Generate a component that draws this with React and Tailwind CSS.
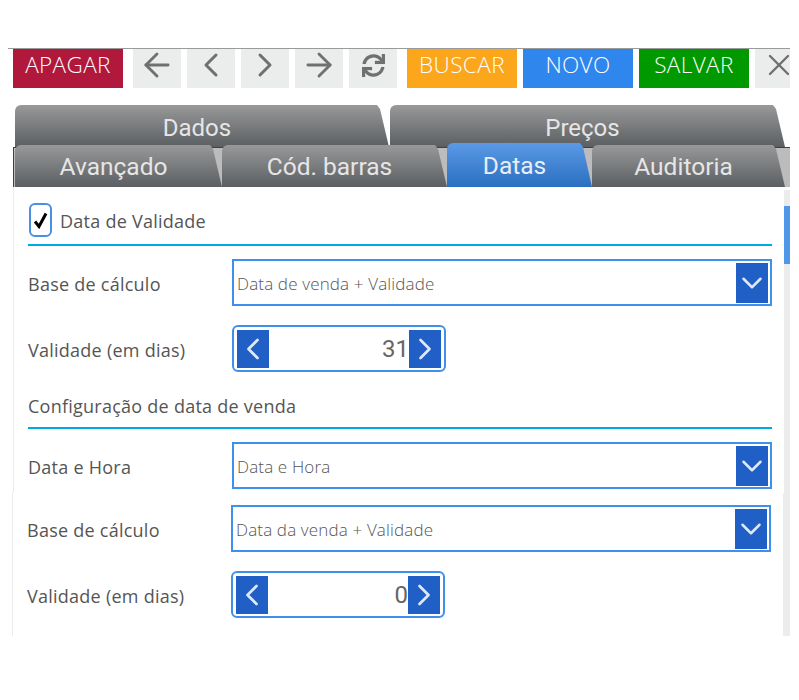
import { ArrowLeft, ArrowRight, ChevronDown, ChevronLeft, ChevronRight, X } from "lucide-react";
import { FaSync } from "react-icons/fa";

const GRAY_TAB = "bg-gradient-to-b from-[#999999] to-[#5b5f62] text-[#e6e6e6]";
const BLUE_TAB = "bg-gradient-to-b from-[#5a9ae6] to-[#2a6fc0] text-[#e8eef5]";
const FONT = "font-['Open_Sans',sans-serif]";
const TAB_CLIP = "[clip-path:polygon(0_0,calc(100%-12px)_0,calc(100%-9px)_4px,100%_100%,0_100%)]";

function ActionButton({ color, children }) {
  return (
    <button className={`w-[110px] h-[39px] pb-[7px] shrink-0 ${color} text-white text-[22.5px] font-light ${FONT} flex items-center justify-center tracking-[0.4px]`}>
      {children}
    </button>
  );
}

function IconButton({ icon: Icon, size = 38, strokeWidth = 1.8 }) {
  return (
    <button className="w-12 h-[39px] pb-[7px] shrink-0 bg-[#ebecec] flex items-center justify-center text-[#707070]">
      <Icon size={size} strokeWidth={strokeWidth} className="shrink-0" />
    </button>
  );
}

function Tab({ width, active, h, className = "", children }) {
  return (
    <div
      className={`${width} ${h} shrink-0 rounded-t-md ${TAB_CLIP} ${active ? BLUE_TAB : GRAY_TAB} flex items-center justify-center pr-[10px] font-['Roboto',sans-serif] ${className}`}
    >
      {children}
    </div>
  );
}

function SelectField({ value }) {
  return (
    <div className="w-[540px] h-[47px] border-2 border-[#3f8fec] flex items-center justify-between pl-[3px] pr-[2px] bg-white">
      <span className={`pt-[3px] text-[17px] tracking-[0.15px] text-[#555] ${FONT} font-light`}>{value}</span>
      <span className="w-8 h-10 bg-[#205fc6] flex items-center justify-center text-[#dfe8f7]">
        <ChevronDown size={34} strokeWidth={1.8} className="shrink-0" />
      </span>
    </div>
  );
}

function Stepper({ value }) {
  return (
    <div className="w-[214px] h-[47px] border-2 border-[#3f8fec] rounded-md flex items-center justify-between px-[3px] bg-white">
      <span className="w-8 h-[38px] bg-[#205fc6] flex items-center justify-center text-[#dfe8f7]">
        <ChevronLeft size={36} strokeWidth={1.8} className="shrink-0" />
      </span>
      <span className="flex-1 text-right text-2xl text-[#666] font-['Roboto',sans-serif]">{value}</span>
      <span className="w-8 h-[38px] bg-[#205fc6] flex items-center justify-center text-[#dfe8f7]">
        <ChevronRight size={36} strokeWidth={1.8} className="shrink-0" />
      </span>
    </div>
  );
}

function FormRow({ label, className = "", children }) {
  return (
    <div className={`flex items-center ${className}`}>
      <span className={`w-[204px] shrink-0 pt-[2px] text-lg tracking-[0.25px] text-[#555] ${FONT}`}>{label}</span>
      {children}
    </div>
  );
}

export default function App() {
  return (
    <div className="w-[799px] h-[700px] bg-white overflow-hidden pt-12 pl-2">
      <div className="w-[782px] border-t border-[#9a9a9a] overflow-hidden">
        {/* toolbar */}
        <div className="flex gap-[10px] pl-[5px]">
          <ActionButton color="bg-[#b0183c]">APAGAR</ActionButton>
          <div className="flex gap-[6px]">
            <IconButton icon={ArrowLeft} />
            <IconButton icon={ChevronLeft} size={40} />
            <IconButton icon={ChevronRight} size={40} />
            <IconButton icon={ArrowRight} />
            <IconButton icon={FaSync} size={23} />
          </div>
          <div className="flex gap-[6px]">
            <ActionButton color="bg-[#fca61c]">BUSCAR</ActionButton>
            <ActionButton color="bg-[#2f86ec]">NOVO</ActionButton>
            <ActionButton color="bg-[#009a00]">SALVAR</ActionButton>
            <IconButton icon={X} size={36} strokeWidth={1.6} />
          </div>
        </div>

        {/* tabs */}
        <div className="flex gap-px pl-[7px] mt-[17px]">
          <Tab width="w-[374px]" h="h-[42px]" className="pt-1 text-2xl">Dados</Tab>
          <Tab width="w-[395px]" h="h-[42px]" className="pt-1 text-2xl">Preços</Tab>
        </div>
        <div className="flex items-end pl-px h-10 bg-[#bcbcbc] ml-[5px] border-t border-l border-[#1d4a6b]">
          <Tab width="w-[207px]" h="h-[42px]" className="pt-[2px] text-[24.5px]">Avançado</Tab>
          <Tab width="w-[225px]" h="h-[42px]" className="pt-[2px] text-[24.5px]">Cód. barras</Tab>
          <Tab width="w-[145px]" h="h-[44px]" className="pt-[2px] text-[24.5px]" active>Datas</Tab>
          <Tab width="w-[193px]" h="h-[42px]" className="pt-[2px] text-[24.5px]">Auditoria</Tab>
        </div>

        {/* content, upper part */}
        <div className="flex ml-[5px] h-[306px] border-l border-[#ececec]">
          <div className="flex-1 pl-[14px] pr-[12px] min-w-0">
            <div className="flex items-center mt-4 pb-[7px] border-b-2 border-[#00a8e4]">
              <span className="ml-px w-[23px] h-[34px] border-2 border-[#4a90e2] rounded-md flex items-center justify-center">
                <svg width="15" height="17" viewBox="0 0 15 17" fill="none" stroke="#000" strokeWidth="3">
                  <path d="M2 9.5 L6 14.5 L13 1.5" />
                </svg>
              </span>
              <span className={`ml-2 pt-[2px] text-lg tracking-[0.25px] text-[#555] ${FONT}`}>Data de Validade</span>
            </div>
            <FormRow label="Base de cálculo" className="mt-[13px]">
              <SelectField value="Data de venda + Validade" />
            </FormRow>
            <FormRow label="Validade (em dias)" className="mt-[19px]">
              <Stepper value="31" />
            </FormRow>
            <div className={`mt-5 pb-[7px] text-lg leading-[28px] tracking-[0.25px] text-[#555] ${FONT} border-b-2 border-[#00a8e4]`}>
              Configuração de data de venda
            </div>
            <FormRow label="Data e Hora" className="mt-[13px]">
              <SelectField value="Data e Hora" />
            </FormRow>
          </div>
          <div className="w-[6px] shrink-0 bg-[#ececec] pt-4 mt-[3px]">
            <div className="h-[58px] bg-[#4f97e8]" />
          </div>
        </div>

        {/* content, lower part */}
        <div className="flex ml-[4px] h-[143px] border-l border-[#ececec]">
          <div className="flex-1 pl-[14px] pr-[12px] min-w-0">
            <FormRow label="Base de cálculo" className="mt-3">
              <SelectField value="Data da venda + Validade" />
            </FormRow>
            <FormRow label="Validade (em dias)" className="mt-[19px]">
              <Stepper value="0" />
            </FormRow>
          </div>
          <div className="w-[7px] shrink-0 bg-[#ececec]" />
        </div>
      </div>
    </div>
  );
}
